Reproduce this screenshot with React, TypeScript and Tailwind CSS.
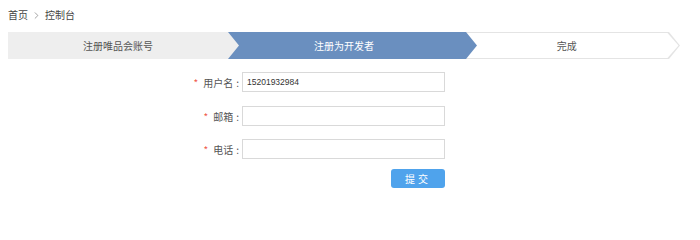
import { ChevronRight } from "lucide-react";

const fields = [
  { label: "用户名", value: "15201932984" },
  { label: "邮箱", value: "" },
  { label: "电话", value: "" },
];

export default function App() {
  return (
    <div className="w-[700px] h-[212px] bg-white text-[#333] font-['Noto_Sans_CJK_SC','Noto_Sans',sans-serif] overflow-hidden">
      {/* Breadcrumb */}
      <div className="flex items-center pl-[8px] pt-[8px] text-[10px] leading-[14px] text-[#444]">
        <span>首页</span>
        <ChevronRight className="mx-[3px] h-[11px] w-[11px] text-[#666]" strokeWidth={1.3} />
        <span>控制台</span>
      </div>

      {/* Steps */}
      <div className="mt-[10px] ml-[8px] flex h-[27px] text-[10px]">
        <div className="relative z-30 -mr-[11px] flex w-[231px] items-center justify-center bg-[#eeeeee] pr-[11px] text-[#555] [clip-path:polygon(0_0,calc(100%-11px)_0,100%_50%,calc(100%-11px)_100%,0_100%)]">
          注册唯品会账号
        </div>
        <div className="relative z-20 -mr-[11px] flex w-[249px] items-center justify-center bg-[#6a8fbf] pr-[17px] text-white [clip-path:polygon(0_0,calc(100%-11px)_0,100%_50%,calc(100%-11px)_100%,0_100%)]">
          注册为开发者
        </div>
        <div className="relative z-10 w-[214px] bg-[#e4e4e4] py-[1px] pr-[1.5px] [clip-path:polygon(0_0,calc(100%-11px)_0,100%_50%,calc(100%-11px)_100%,0_100%)]">
          <div className="flex h-full items-center justify-center bg-white pr-[11px] text-[#555] [clip-path:polygon(0_0,calc(100%-11px)_0,100%_50%,calc(100%-11px)_100%,0_100%)]">
            完成
          </div>
        </div>
      </div>

      {/* Form */}
      <div className="mt-[13px] flex flex-col gap-[14px]">
        {fields.map((f, i) => (
          <div key={f.label} className={"flex items-center " + (i === 2 ? "-mt-[1px]" : "")}>
            <div className="flex w-[242px] items-center justify-end pr-[3px] text-[10px] text-[#555]">
              <span className="mr-[5px] text-[#f05a4a]">*</span>
              <span>{f.label}</span>
              <span className="ml-[3px]">:</span>
            </div>
            <input
              readOnly
              value={f.value}
              className="h-[20px] w-[203px] border border-[#d9d9d9] bg-white px-[4px] font-['Liberation_Sans',sans-serif] text-[8.5px] text-[#333] outline-none"
            />
          </div>
        ))}
      </div>
      <div className="mt-[10px] pl-[391px]">
        <button className="flex h-[19px] w-[54px] items-center justify-center rounded-[3px] bg-[#4fa3ec] text-[10px] tracking-[3px] text-white">
          提交
        </button>
      </div>
    </div>
  );
}
